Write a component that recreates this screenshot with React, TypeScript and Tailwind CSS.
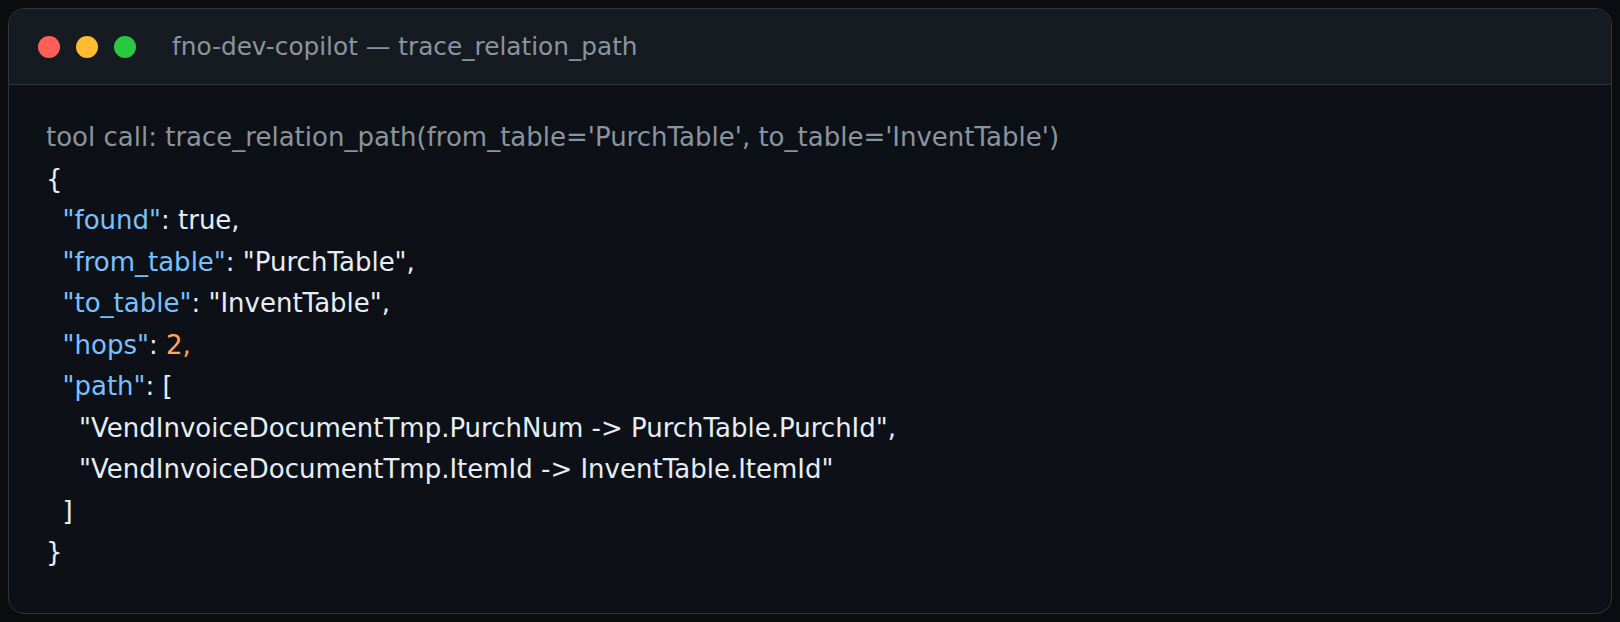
import React from 'react'

const Key = ({ children }: { children: React.ReactNode }) => (
    <span className="text-[#79c0ff]">{children}</span>
)

const App = () => {
    return (
        <div className="w-full h-[622px] bg-[#0a0c10] p-2" style={{ fontFamily: '"DejaVu Sans", sans-serif' }}>
            <div className="h-full rounded-2xl border border-[#30363d] bg-[#0d1117] overflow-hidden flex flex-col">
                {/* Title bar */}
                <div className="h-[76px] shrink-0 flex items-center pl-[29px] bg-[#161b22] border-b border-[#30363d]">
                    <div className="flex items-center gap-4">
                        <span className="w-[22px] h-[22px] rounded-full bg-[#ff5f57]" />
                        <span className="w-[22px] h-[22px] rounded-full bg-[#febc2e]" />
                        <span className="w-[22px] h-[22px] rounded-full bg-[#28c840]" />
                    </div>
                    <span className="ml-[36px] text-[24.75px] text-[#8b949e]">fno-dev-copilot — trace_relation_path</span>
                </div>

                {/* Output */}
                <pre
                    className="pl-[37px] pt-[32px] text-[26px] leading-[41.5px] text-[#e6edf3] whitespace-pre"
                    style={{ fontFamily: '"DejaVu Sans", sans-serif' }}
                >
                    <div className="text-[#8b949e]">tool call: trace_relation_path(from_table='PurchTable', to_table='InventTable')</div>
                    <div>{'{'}</div>
                    <div>{'  '}<Key>"found"</Key>: true,</div>
                    <div>{'  '}<Key>"from_table"</Key>: "PurchTable",</div>
                    <div>{'  '}<Key>"to_table"</Key>: "InventTable",</div>
                    <div>{'  '}<Key>"hops"</Key>: <span className="text-[#ffa657]">2,</span></div>
                    <div>{'  '}<Key>"path"</Key>: [</div>
                    <div>{'    '}"VendInvoiceDocumentTmp.PurchNum -&gt; PurchTable.PurchId",</div>
                    <div>{'    '}"VendInvoiceDocumentTmp.ItemId -&gt; InventTable.ItemId"</div>
                    <div>{'  '}]</div>
                    <div>{'}'}</div>
                </pre>
            </div>
        </div>
    )
}

export default App
